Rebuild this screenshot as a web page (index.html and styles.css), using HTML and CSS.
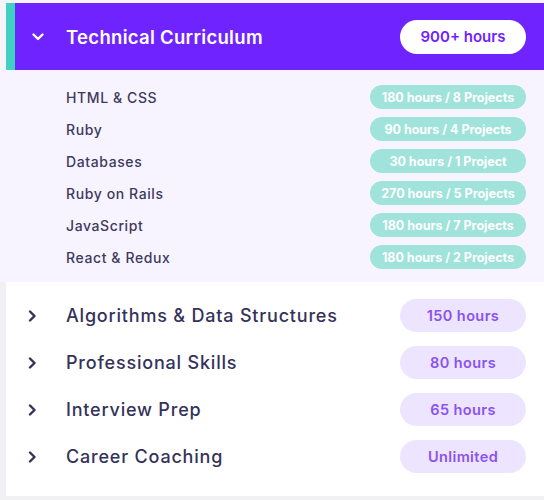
FILE: index.html
```html
<!DOCTYPE html>
<html>
<head>
<meta charset="utf-8">
<link rel="stylesheet" href="styles.css">
</head>
<body>
<div class="page">
  <div class="section-head">
    <svg class="chev-down" width="12" height="8" viewBox="0 0 12 8"><path d="M1.5 1.5 L6 6 L10.5 1.5" fill="none" stroke="#fff" stroke-width="2.4" stroke-linecap="round" stroke-linejoin="round"/></svg>
    <span class="head-title">Technical Curriculum</span>
    <span class="head-pill">900+ hours</span>
  </div>
  <div class="sublist">
    <div class="sub-row"><span class="sub-name">HTML &amp; CSS</span><span class="sub-pill">180 hours / 8 Projects</span></div>
    <div class="sub-row"><span class="sub-name">Ruby</span><span class="sub-pill">90 hours / 4 Projects</span></div>
    <div class="sub-row"><span class="sub-name">Databases</span><span class="sub-pill">30 hours / 1 Project</span></div>
    <div class="sub-row"><span class="sub-name">Ruby on Rails</span><span class="sub-pill">270 hours / 5 Projects</span></div>
    <div class="sub-row"><span class="sub-name">JavaScript</span><span class="sub-pill">180 hours / 7 Projects</span></div>
    <div class="sub-row"><span class="sub-name">React &amp; Redux</span><span class="sub-pill">180 hours / 2 Projects</span></div>
  </div>
  <div class="card">
    <div class="row">
      <svg class="chev-right" width="9" height="12" viewBox="0 0 9 12"><path d="M2 1.5 L6.5 6 L2 10.5" fill="none" stroke="#35325a" stroke-width="2.4" stroke-linecap="round" stroke-linejoin="round"/></svg>
      <span class="row-title">Algorithms &amp; Data Structures</span>
      <span class="row-pill">150 hours</span>
    </div>
    <div class="row">
      <svg class="chev-right" width="9" height="12" viewBox="0 0 9 12"><path d="M2 1.5 L6.5 6 L2 10.5" fill="none" stroke="#35325a" stroke-width="2.4" stroke-linecap="round" stroke-linejoin="round"/></svg>
      <span class="row-title">Professional Skills</span>
      <span class="row-pill">80 hours</span>
    </div>
    <div class="row">
      <svg class="chev-right" width="9" height="12" viewBox="0 0 9 12"><path d="M2 1.5 L6.5 6 L2 10.5" fill="none" stroke="#35325a" stroke-width="2.4" stroke-linecap="round" stroke-linejoin="round"/></svg>
      <span class="row-title">Interview Prep</span>
      <span class="row-pill">65 hours</span>
    </div>
    <div class="row">
      <svg class="chev-right" width="9" height="12" viewBox="0 0 9 12"><path d="M2 1.5 L6.5 6 L2 10.5" fill="none" stroke="#35325a" stroke-width="2.4" stroke-linecap="round" stroke-linejoin="round"/></svg>
      <span class="row-title">Career Coaching</span>
      <span class="row-pill">Unlimited</span>
    </div>
  </div>
</div>
</body>
</html>
```

FILE: styles.css
```css
html, body {
  margin: 0;
  padding: 0;
  background: #f1f1f4;
}
body {
  font-family: Inter, "Open Sans", sans-serif;
  width: 544px;
  height: 500px;
  overflow: hidden;
}
.page {
  padding-top: 3px;
  background: linear-gradient(#f6f4fb, #f6f4fb) top / 100% 282px no-repeat, #f1f1f4;
}
.section-head {
  margin-left: 6px;
  height: 67px;
  background: #6f23ff;
  border-left: 9px solid #3fd1c1;
  display: flex;
  align-items: center;
  padding-right: 18px;
}
.chev-down {
  margin-left: 17px;
  flex: none;
}
.head-title {
  margin-left: 22px;
  color: #ffffff;
  font-size: 18.5px;
  font-weight: 600;
  letter-spacing: 0.3px;
  flex: 1;
}
.head-pill {
  width: 126px;
  height: 34px;
  border-radius: 17px;
  background: #ffffff;
  color: #6f23ff;
  font-size: 15px;
  font-weight: 600;
  display: flex;
  align-items: center;
  justify-content: center;
}
.sublist {
  background: #f7f4ff;
  padding: 11px 18px 9px 66px;
}
.sub-row {
  height: 32px;
  display: flex;
  align-items: center;
  justify-content: space-between;
}
.sub-name {
  color: #3e3a5e;
  font-size: 14px;
  font-weight: 500;
  letter-spacing: 0.6px;
}
.sub-pill {
  width: 156px;
  height: 24px;
  border-radius: 12px;
  background: #9fe3db;
  color: #ffffff;
  font-size: 12.5px;
  font-weight: 700;
  letter-spacing: 0;
  display: flex;
  align-items: center;
  justify-content: center;
}
.card {
  margin-left: 6px;
  background: #ffffff;
  padding: 10px 18px 16px 0;
}
.row {
  height: 47px;
  display: flex;
  align-items: center;
}
.chev-right {
  margin-left: 22px;
  flex: none;
}
.row-title {
  margin-left: 29px;
  flex: 1;
  color: #35325a;
  font-size: 18px;
  font-weight: 500;
  letter-spacing: 0.8px;
}
.row-pill {
  width: 126px;
  height: 33px;
  border-radius: 17px;
  background: #ede4ff;
  color: #8a52ee;
  font-size: 14.5px;
  font-weight: 600;
  letter-spacing: 0.4px;
  display: flex;
  align-items: center;
  justify-content: center;
}
```
